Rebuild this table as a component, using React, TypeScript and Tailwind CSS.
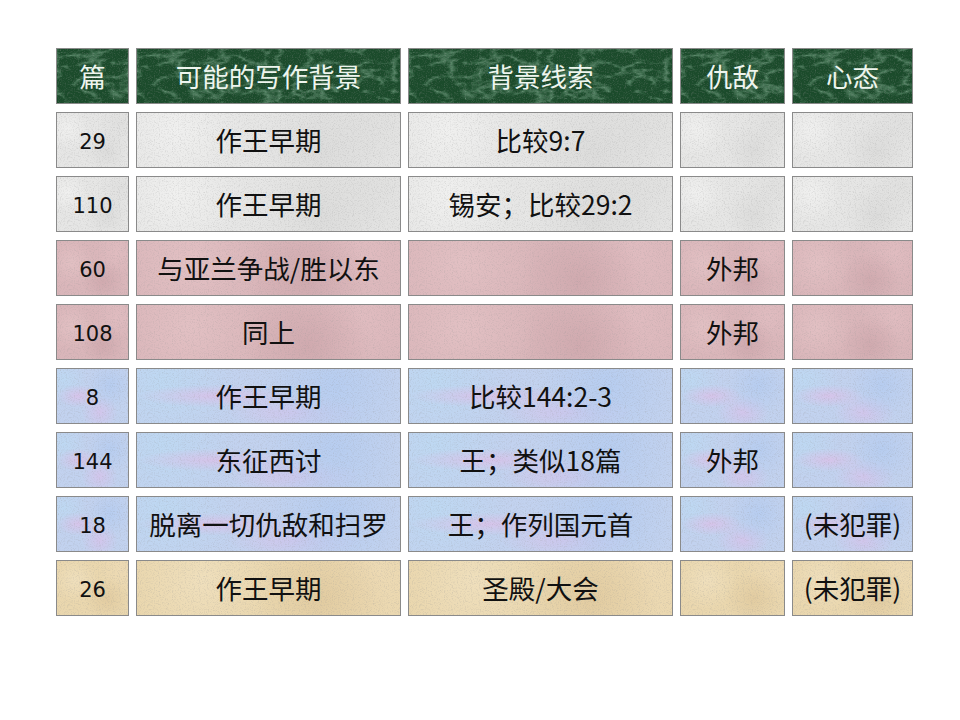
import React from "react";

type Tone = "gray" | "pink" | "blue" | "tan";

const rows: { n: string; bg: string; clue: string; foe: string; mood: string; tone: Tone }[] = [
  { n: "29", bg: "作王早期", clue: "比较9:7", foe: "", mood: "", tone: "gray" },
  { n: "110", bg: "作王早期", clue: "锡安；比较29:2", foe: "", mood: "", tone: "gray" },
  { n: "60", bg: "与亚兰争战/胜以东", clue: "", foe: "外邦", mood: "", tone: "pink" },
  { n: "108", bg: "同上", clue: "", foe: "外邦", mood: "", tone: "pink" },
  { n: "8", bg: "作王早期", clue: "比较144:2-3", foe: "", mood: "", tone: "blue" },
  { n: "144", bg: "东征西讨", clue: "王；类似18篇", foe: "外邦", mood: "", tone: "blue" },
  { n: "18", bg: "脱离一切仇敌和扫罗", clue: "王；作列国元首", foe: "", mood: "(未犯罪)", tone: "blue" },
  { n: "26", bg: "作王早期", clue: "圣殿/大会", foe: "", mood: "(未犯罪)", tone: "tan" },
];

const toneClass: Record<Tone, string> = {
  gray:
    "bg-[#e6e6e5] bg-[radial-gradient(circle_at_15%_30%,#f0f0ef_0%,transparent_30%),radial-gradient(circle_at_70%_70%,#dcdcdb_0%,transparent_35%),radial-gradient(circle_at_90%_20%,#e0e0df_0%,transparent_30%)]",
  pink:
    "bg-[#dab6ba] bg-[radial-gradient(circle_at_20%_40%,#e2c0c3_0%,transparent_35%),radial-gradient(circle_at_65%_75%,#d0aaaf_0%,transparent_35%),radial-gradient(circle_at_85%_20%,#e0bcc0_0%,transparent_30%)]",
  blue:
    "bg-[#c2d2ef] bg-[radial-gradient(ellipse_at_30%_50%,#d6c4ea_0%,transparent_30%),radial-gradient(circle_at_75%_30%,#b7cdf0_0%,transparent_35%),radial-gradient(ellipse_at_60%_80%,#d2c6ec_0%,transparent_30%),radial-gradient(circle_at_10%_20%,#bed8f2_0%,transparent_30%)]",
  tan:
    "bg-[#ead7ae] bg-[radial-gradient(circle_at_25%_35%,#efdfbc_0%,transparent_35%),radial-gradient(circle_at_70%_70%,#e2cca1_0%,transparent_35%),radial-gradient(circle_at_90%_15%,#eddab4_0%,transparent_30%)]",
};

const headClass = "bg-[#1b4b2b] text-[#eef5ee]";

// shared filter defs for the stone textures
function Textures() {
  return (
    <svg className="absolute h-0 w-0" aria-hidden>
      <filter id="grain" x="0" y="0" width="100%" height="100%">
        <feTurbulence type="fractalNoise" baseFrequency="0.85" numOctaves="3" seed="4" />
        <feColorMatrix values="0 0 0 0 0.3  0 0 0 0 0.3  0 0 0 0 0.3  2.2 0 0 0 -1.05" />
      </filter>
      <filter id="marble" x="0" y="0" width="100%" height="100%">
        <feTurbulence type="turbulence" baseFrequency="0.035 0.07" numOctaves="4" seed="7" />
        <feColorMatrix values="0 0 0 0 0.36  0 0 0 0 0.62  0 0 0 0 0.44  -3.2 0 0 0 0.95" />
      </filter>
    </svg>
  );
}

function Cell({
  children,
  className,
  small,
  head,
}: {
  children?: React.ReactNode;
  className: string;
  small?: boolean;
  head?: boolean;
}) {
  return (
    <div
      className={`relative flex h-[56px] items-center justify-center overflow-hidden border border-[#8a8a8a] whitespace-nowrap ${
        small ? "text-[21px]" : "text-[26.5px]"
      } ${className}`}
    >
      <svg className="absolute inset-0 h-full w-full" aria-hidden>
        {head && <rect width="100%" height="100%" filter="url(#marble)" opacity="0.5" />}
        <rect width="100%" height="100%" filter="url(#grain)" opacity={head ? 0.35 : 0.3} />
      </svg>
      <span
        className={small ? "relative mt-[6px]" : "relative"}
        style={small ? { fontFamily: '"DejaVu Sans", "Noto Sans CJK SC", sans-serif' } : undefined}
      >
        {children}
      </span>
    </div>
  );
}

export default function App() {
  return (
    <div
      className="relative h-[720px] w-[960px] bg-white pl-[56px] pt-[48px]"
      style={{ fontFamily: '"Noto Sans CJK SC", "Noto Sans", sans-serif' }}
    >
      <Textures />
      <div className="grid w-[857px] grid-cols-[73px_265px_265px_105px_121px] gap-x-[7px] gap-y-[8px] text-[#111]">
        <Cell head className={headClass}>篇</Cell>
        <Cell head className={headClass}>可能的写作背景</Cell>
        <Cell head className={headClass}>背景线索</Cell>
        <Cell head className={headClass}>仇敌</Cell>
        <Cell head className={headClass}>心态</Cell>
        {rows.map((r) => (
          <React.Fragment key={r.n}>
            <Cell small className={toneClass[r.tone]}>
              {r.n}
            </Cell>
            <Cell className={toneClass[r.tone]}>{r.bg}</Cell>
            <Cell className={toneClass[r.tone]}>{r.clue}</Cell>
            <Cell className={toneClass[r.tone]}>{r.foe}</Cell>
            <Cell className={toneClass[r.tone]}>{r.mood}</Cell>
          </React.Fragment>
        ))}
      </div>
    </div>
  );
}
